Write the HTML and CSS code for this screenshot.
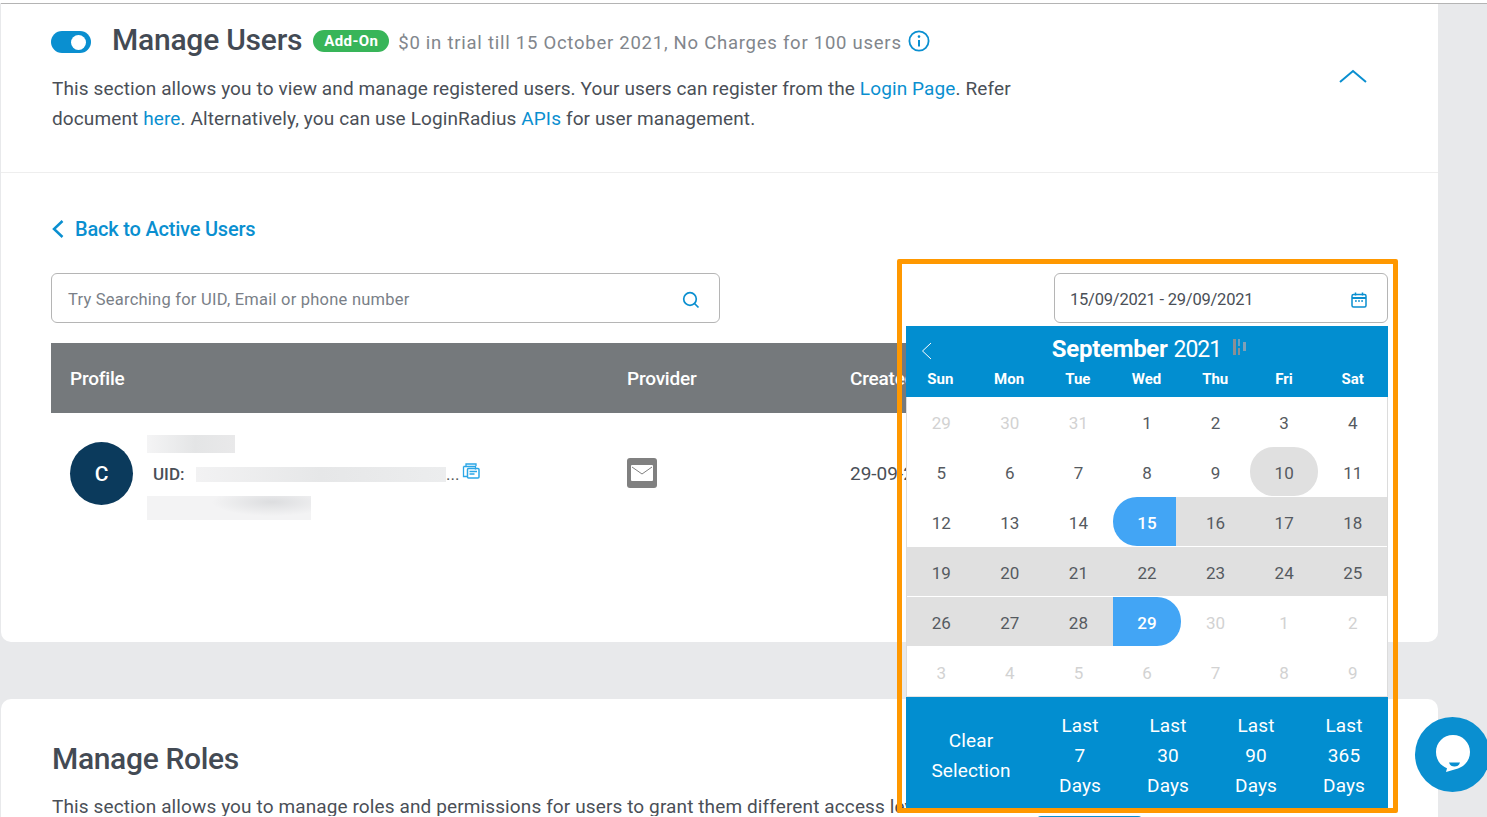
FILE: index.html
```html
<!DOCTYPE html>
<html lang="en">
<head>
<meta charset="utf-8">
<title>Manage Users</title>
<link rel="stylesheet" href="styles.css">
</head>
<body>
<main class="page">
  <section class="card card-users">
    <header class="section-head">
      <div class="section-intro">
        <div class="title-row">
          <span class="toggle"><span class="toggle-knob"></span></span>
          <h1 class="title">Manage Users</h1>
          <span class="badge">Add-On</span>
          <span class="trial">$0 in trial till 15 October 2021, No Charges for 100 users</span>
          <svg class="info-icon" viewBox="0 0 22 22" width="22" height="22"><circle cx="11" cy="11" r="9.6" fill="none" stroke="#0a8fd0" stroke-width="1.8"/><circle cx="11" cy="6.6" r="1.3" fill="#0a8fd0"/><path d="M11 10v6.4" stroke="#0a8fd0" stroke-width="2" fill="none"/></svg>
        </div>
        <p class="desc">This section allows you to view and manage registered users. Your users can register from the <a class="link">Login Page</a>. Refer<br>document <a class="link">here</a>. Alternatively, you can use LoginRadius <a class="link">APIs</a> for user management.</p>
      </div>
      <svg class="collapse-icon" viewBox="0 0 28 14" width="28" height="14"><path d="M1 13L14 2l13 11" fill="none" stroke="#0a8fd0" stroke-width="2"/></svg>
    </header>
    <div class="section-body">
      <a class="back-link">
        <svg viewBox="0 0 12 18" width="12" height="18"><path d="M10.5 1L2 9l8.500 8" fill="none" stroke="#0a8fd0" stroke-width="2.500"/></svg>
        <span>Back to Active Users</span>
      </a>
      <div class="toolbar">
        <div class="search">
          <span class="search-text">Try Searching for UID, Email or phone number</span>
          <svg class="search-icon" viewBox="0 0 18 18" width="18" height="18"><circle cx="8" cy="8" r="6.300" fill="none" stroke="#0a8fd0" stroke-width="1.700"/><path d="M12.500 12.500L16.500 16.500" stroke="#0a8fd0" stroke-width="1.700"/></svg>
        </div>
        <div class="date-input">
          <span class="date-text">15/09/2021 - 29/09/2021</span>
          <svg class="date-icon" viewBox="0 0 16 16" width="16" height="16"><rect x="1" y="2.500" width="14" height="12.500" rx="1.500" fill="none" stroke="#0a8fd0" stroke-width="1.500"/><path d="M1 6h14" stroke="#0a8fd0" stroke-width="2"/><path d="M4.500 0.500v3M11.500 0.500v3" stroke="#0a8fd0" stroke-width="1.500"/><path d="M4 9h1.800M7.100 9h1.800M10.200 9H12" stroke="#0a8fd0" stroke-width="1.500"/></svg>
        </div>
      </div>
      <div class="table">
        <div class="table-head">
          <span>Profile</span><span>Provider</span><span class="clip">Created</span>
        </div>
        <div class="table-row">
          <div class="profile">
            <span class="avatar">C</span>
            <div class="profile-info">
              <span class="blur blur-name"></span>
              <div class="uid-row">
                <span class="uid-label">UID:</span>
                <span class="blur blur-uid"></span>
                <span class="uid-dots">...</span>
                <svg class="copy-icon" viewBox="0 0 18 16" width="18" height="16"><path d="M4 3V1h10v2M1.500 3.500h12v3M1.500 3.500v10h3.500" fill="none" stroke="#2ba6e6" stroke-width="1.300"/><rect x="5.500" y="5.500" width="11.500" height="9.500" rx="1" fill="none" stroke="#2ba6e6" stroke-width="1.500"/><path d="M7.500 8.500h7.500M7.500 11h5" stroke="#2ba6e6" stroke-width="1.300"/></svg>
              </div>
              <span class="blur blur-email"></span>
            </div>
          </div>
          <div class="provider">
            <span class="provider-icon"><svg viewBox="0 0 22 16" width="22" height="16"><rect width="22" height="16" rx="1" fill="#fff"/><path d="M1 2l10 7 10-7" fill="none" stroke="#808080" stroke-width="1"/></svg></span>
          </div>
          <div class="created clip">29-09-2021</div>
        </div>
      </div>
    </div>
  </section>

  <section class="card card-roles">
    <h2 class="roles-title">Manage Roles</h2>
    <p class="roles-desc">This section allows you to manage roles and permissions for users to grant them different access levels.</p>
    <span class="roles-button"></span>
  </section>
</main>

<div class="calendar">
  <div class="cal-head">
    <svg class="cal-prev" viewBox="0 0 11 18" width="11" height="18"><path d="M10 1L1.500 9l8.500 8" fill="none" stroke="#fff" stroke-width="1"/></svg>
    <div class="cal-month"><b>September</b> <span class="cal-year">2021</span>
      <svg class="cal-mark" viewBox="0 0 14 16" width="14" height="16"><rect x="0" y="0" width="3" height="16" fill="#8b8f94"/><rect x="5" y="0" width="2" height="7" fill="#6f9fbf"/><rect x="5" y="9" width="2" height="7" fill="#8b8f94"/><rect x="10" y="3" width="3" height="9" fill="#7fa0b8"/></svg>
    </div>
    <div class="cal-weekdays">
      <span>Sun</span><span>Mon</span><span>Tue</span><span>Wed</span><span>Thu</span><span>Fri</span><span>Sat</span>
    </div>
  </div>
  <div class="cal-grid">
    <span class="day muted">29</span><span class="day muted">30</span><span class="day muted">31</span><span class="day">1</span><span class="day">2</span><span class="day">3</span><span class="day">4</span>
    <span class="day">5</span><span class="day">6</span><span class="day">7</span><span class="day">8</span><span class="day">9</span><span class="day today">10</span><span class="day">11</span>
    <span class="day">12</span><span class="day">13</span><span class="day">14</span><span class="day start">15</span><span class="day range">16</span><span class="day range">17</span><span class="day range">18</span>
    <span class="day range">19</span><span class="day range">20</span><span class="day range">21</span><span class="day range">22</span><span class="day range">23</span><span class="day range">24</span><span class="day range">25</span>
    <span class="day range">26</span><span class="day range">27</span><span class="day range">28</span><span class="day end">29</span><span class="day muted">30</span><span class="day muted">1</span><span class="day muted">2</span>
    <span class="day muted">3</span><span class="day muted">4</span><span class="day muted">5</span><span class="day muted">6</span><span class="day muted">7</span><span class="day muted">8</span><span class="day muted">9</span>
  </div>
  <div class="cal-foot">
    <span class="preset">Clear<br>Selection</span>
    <span class="preset">Last<br>7<br>Days</span>
    <span class="preset">Last<br>30<br>Days</span>
    <span class="preset">Last<br>90<br>Days</span>
    <span class="preset">Last<br>365<br>Days</span>
  </div>
</div>

<div class="highlight-frame"></div>

<div class="chat-button">
  <svg viewBox="0 0 38 42" width="38" height="42"><path d="M19 1C28.500 1 36 8.500 36 18c0 8-5 14-12 16.500L12 38l1-3.800C6 31.500 2 25.500 2 18 2 8.500 9.500 1 19 1z" fill="#fff"/><path d="M15 28.500h11c-1 3-3 4-5.500 4S16 31.500 15 28.500z" fill="#0a8fd0"/></svg>
</div>
</body>
</html>
```

FILE: styles.css
```css
* { box-sizing: border-box; }

html, body {
  margin: 0;
  height: 817px;
  overflow: hidden;
}

body {
  background: #e8e9eb;
  font-family: Roboto, "Liberation Sans", sans-serif;
  color: #4a4f57;
  position: relative;
}

.page {
  width: 1487px;
  height: 817px;
  overflow: hidden;
  border-top: 3px solid #fff;
}

.card {
  background: #fff;
  margin-left: 1px;
  width: 1437px;
}

.card-users {
  height: 639px;
  border-top: 1px solid #b4b4b4;
  border-radius: 0 0 10px 10px;
  position: relative;
}

.card-users::before {
  content: "";
  position: absolute;
  left: 1437px;
  top: -1px;
  width: 49px;
  height: 1px;
  background: #b4b4b4;
}

.section-head {
  height: 169px;
  border-bottom: 1px solid #eeeeee;
  padding: 20px 71px 0 50px;
  display: flex;
  justify-content: space-between;
}

.title-row {
  display: flex;
  align-items: center;
  height: 34px;
}

.toggle {
  width: 40px;
  height: 22px;
  border-radius: 11px;
  background: #0a8fd0;
  padding: 4px 5px 3px 20px;
  margin-top: 1px;
  flex: none;
}

.toggle-knob {
  display: block;
  width: 15px;
  height: 15px;
  border-radius: 50%;
  background: #fff;
}

.title {
  margin: -2px 0 0 21px;
  font-size: 30px;
  font-weight: 500;
  color: #434a54;
  letter-spacing: -0.23px;
  line-height: 34px;
  white-space: nowrap;
}

.badge {
  margin-left: 11px;
  width: 76px;
  height: 22px;
  border-radius: 11px;
  background: #38b559;
  color: #fff;
  font-size: 15px;
  font-weight: 700;
  line-height: 22px;
  text-align: center;
  letter-spacing: 0.4px;
  flex: none;
}

.trial {
  margin-left: 9px;
  margin-top: 3px;
  font-size: 18.500px;
  color: #82868c;
  letter-spacing: 0.75px;
  white-space: nowrap;
}

.info-icon { margin-left: 6px; flex: none; }

.desc {
  margin: 16px 0 0 1px;
  font-size: 19px;
  line-height: 30px;
  letter-spacing: 0.115px;
  white-space: nowrap;
  color: #4a4f57;
}

.link { color: #0a8fd0; }

.collapse-icon { margin-top: 45px; flex: none; }

.section-body {
  padding: 44px 50px 0 50px;
}

.back-link {
  display: flex;
  align-items: center;
  gap: 11px;
  height: 24px;
  margin-left: 1px;
  color: #0a8fd0;
  font-size: 20px;
  font-weight: 500;
  letter-spacing: -0.2px;
}

.toolbar {
  display: flex;
  justify-content: space-between;
  margin-top: 32px;
}

.search, .date-input {
  height: 50px;
  border: 1px solid #b5b5b5;
  border-radius: 6px;
  display: flex;
  align-items: center;
  justify-content: space-between;
  background: #fff;
}

.search {
  width: 669px;
  padding: 2px 19px 0 16px;
}

.search-text {
  font-size: 16.500px;
  letter-spacing: 0.23px;
  color: #7a7f88;
}

.search-icon { margin-top: 2px; }

.date-input {
  width: 334px;
  padding: 2px 20px 0 15px;
}

.date-text {
  font-size: 16.500px;
  letter-spacing: -0.22px;
  color: #4a4f57;
}

.date-icon { margin-top: 2px; }

.table {
  margin-top: 20px;
}

.table-head {
  height: 70px;
  background: #75797c;
  color: #fff;
  display: grid;
  grid-template-columns: 557px 223px 1fr;
  align-items: center;
  padding-left: 19px;
  font-size: 19px;
  font-weight: 500;
  letter-spacing: -0.2px;
}

.clip {
  width: 56px;
  overflow: hidden;
  white-space: nowrap;
}

.table-row {
  display: grid;
  grid-template-columns: 557px 223px 1fr;
  padding: 22px 0 0 19px;
  align-items: start;
}

.profile {
  display: flex;
  gap: 14px;
  align-items: flex-start;
}

.avatar {
  width: 63px;
  height: 63px;
  margin-top: 7px;
  border-radius: 50%;
  background: #0b3a5c;
  color: #fff;
  font-size: 21px;
  font-weight: 500;
  display: flex;
  align-items: center;
  justify-content: center;
  flex: none;
}

.profile-info {
  display: flex;
  flex-direction: column;
  align-items: flex-start;
}

.blur { display: block; }

.blur-name {
  width: 88px;
  height: 18px;
  background: linear-gradient(90deg, #f4f4f5, #e4e5e6 55%, #e9e9ea);
}

.blur-email {
  width: 164px;
  height: 24px;
  margin-top: 12px;
  background: radial-gradient(ellipse 60px 14px at 125px 6px, #dcdddf, transparent), #f3f3f4;
}

.uid-row {
  display: flex;
  align-items: center;
  padding-left: 6px;
  margin-top: 11px;
  height: 20px;
  font-size: 17px;
}

.uid-label { font-weight: 500; color: #4a4f57; width: 43px; }

.blur-uid {
  width: 250px;
  height: 15px;
  background: linear-gradient(90deg, #f2f2f3, #e6e7e8 50%, #ecedee);
}

.uid-dots { width: 16px; color: #555; }

.copy-icon { margin-top: -6px; flex: none; }

.provider { padding-top: 23px; }

.provider-icon {
  width: 30px;
  height: 30px;
  border-radius: 3px;
  background: #808080;
  display: flex;
  align-items: center;
  justify-content: center;
}

.created {
  font-size: 19px;
  margin-top: 27px;
}

.card-roles {
  margin-top: 57px;
  height: 200px;
  border-radius: 10px 10px 0 0;
  padding: 41px 0 0 51px;
}

.roles-title {
  margin: 0;
  font-size: 30px;
  font-weight: 500;
  color: #434a54;
  letter-spacing: -0.33px;
  line-height: 38px;
}

.roles-desc {
  margin: 19px 0 0;
  width: 854px;
  font-size: 19px;
  line-height: 20px;
  height: 19px;
  letter-spacing: 0.115px;
  white-space: nowrap;
  overflow: hidden;
}

.roles-button {
  display: block;
  width: 105px;
  height: 20px;
  margin-left: 985px;
  background: #0a8fd0;
  border-radius: 4px;
}

.calendar {
  position: absolute;
  left: 906px;
  top: 326px;
  width: 482px;
  height: 482px;
  background: #fff;
  display: flex;
  flex-direction: column;
}

.cal-head {
  height: 71px;
  background: #028ed0;
  color: #fff;
  position: relative;
  padding-top: 8px;
}

.cal-prev {
  position: absolute;
  left: 15px;
  top: 16px;
}

.cal-month {
  text-align: center;
  font-size: 24px;
  line-height: 30px;
  height: 30px;
  padding-left: 5px;
}

.cal-month b {
  font-weight: 700;
  letter-spacing: -0.3px;
}

.cal-year {
  font-size: 23px;
  letter-spacing: -1px;
}

.cal-mark { margin-left: 6px; vertical-align: 2px; }

.cal-weekdays {
  display: grid;
  grid-template-columns: repeat(7, 1fr);
  margin-top: 4px;
  padding-right: 1px;
  text-align: center;
  font-size: 15px;
  font-weight: 700;
  line-height: 22px;
}

.cal-grid {
  flex: 1;
  display: grid;
  grid-template-columns: repeat(7, 1fr);
  grid-auto-rows: 49px;
  row-gap: 1px;
  border-left: 1px solid #dcdcdc;
  border-right: 1px solid #dcdcdc;
  border-bottom: 1px solid #e4e4e4;
}

.day {
  display: flex;
  align-items: center;
  justify-content: center;
  padding-top: 2px;
  font-size: 17px;
  color: #555a60;
}

.day.muted { color: #d2d2d2; }

.today {
  background: #e0e0e0;
  border-radius: 24px;
}

.range { background: #e0e0e0; }

.start, .end {
  font-weight: 500;
}

.day.start {
  color: #fff;
  background: linear-gradient(90deg, #42a5f5 63px, #e0e0e0 63px);
  border-radius: 24px 0 0 24px;
}

.day.end {
  color: #fff;
  background: #42a5f5;
  border-radius: 0 24px 24px 0;
}

.cal-foot {
  height: 111px;
  padding-top: 6px;
  background: #028ed0;
  color: #fff;
  display: grid;
  grid-template-columns: 130px repeat(4, 88px);
  align-items: center;
  flex: none;
}

.preset {
  text-align: center;
  font-size: 19px;
  line-height: 30px;
  letter-spacing: 0.1px;
}

.highlight-frame {
  position: absolute;
  left: 897px;
  top: 259px;
  width: 501px;
  height: 554px;
  border: 5px solid #ff9800;
  border-radius: 2px;
  pointer-events: none;
}

.chat-button {
  position: absolute;
  left: 1415px;
  top: 717px;
  width: 75px;
  height: 75px;
  border-radius: 50%;
  background: #0a8fd0;
  display: flex;
  align-items: center;
  justify-content: center;
}
```
